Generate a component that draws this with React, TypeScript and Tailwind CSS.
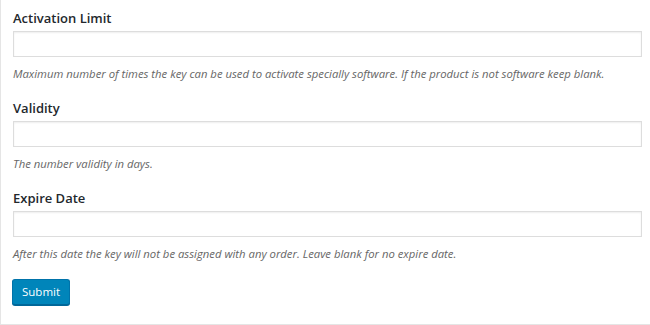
import React from "react";

const fields = [
    {
        label: "Activation Limit",
        help: "Maximum number of times the key can be used to activate specially software. If the product is not software keep blank.",
    },
    {label: "Validity", help: "The number validity in days."},
    {
        label: "Expire Date",
        help: "After this date the key will not be assigned with any order. Leave blank for no expire date.",
    },
];

export default function App() {
    return (
        <div
            className="w-[650px] h-[325px] bg-white border-l border-b border-[#e5e5e5] text-[13px] text-[#23282d]"
            style={{fontFamily: '"Open Sans", "Noto Sans", sans-serif'}}
        >
            <form className="flex flex-col pl-[12px] pr-[8px] pt-[9px]" onSubmit={(e) => e.preventDefault()}>
                {fields.map((f) => (
                    <div key={f.label} className="flex flex-col h-[90px]">
                        <label className="font-semibold leading-[18px]">{f.label}</label>
                        <input
                            type="text"
                            className="mt-[4px] h-[26px] w-[629px] border border-[#ddd] shadow-[inset_0_1px_2px_rgba(0,0,0,0.07)] outline-none px-2"
                        />
                        <p className="mt-[8px] italic text-[11.3px] text-[#666] leading-[18px] whitespace-nowrap">{f.help}</p>
                    </div>
                ))}
                <div>
                    <button
                        type="submit"
                        className="-ml-px h-[26px] px-[9px] rounded-[3px] bg-[#0085ba] border border-[#0073aa] border-b-[#006799] text-white text-[11.5px] leading-none shadow-[0_1px_0_#006799]"
                    >
                        Submit
                    </button>
                </div>
            </form>
        </div>
    );
}
